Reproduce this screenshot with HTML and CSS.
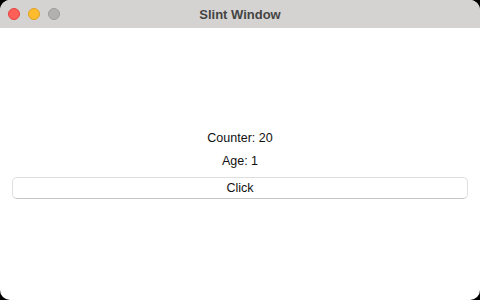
FILE: index.html
```html
<!DOCTYPE html>
<html>
<head>
<meta charset="utf-8">
<link rel="stylesheet" href="styles.css">
</head>
<body>
<div class="window">
  <div class="titlebar">
    <div class="lights">
      <span class="light red"></span>
      <span class="light yellow"></span>
      <span class="light gray"></span>
    </div>
    <div class="title">Slint Window</div>
  </div>
  <div class="content">
    <div class="label">Counter: 20</div>
    <div class="label">Age: 1</div>
    <button class="btn">Click</button>
  </div>
</div>
</body>
</html>
```
FILE: styles.css
```css
html, body {
  margin: 0;
  padding: 0;
  background: #000;
  width: 480px;
  height: 300px;
  overflow: hidden;
}
.window {
  width: 480px;
  height: 300px;
  border-radius: 10px;
  overflow: hidden;
  background: #fff;
  display: flex;
  flex-direction: column;
  font-family: "Liberation Sans", Arial, sans-serif;
}
.titlebar {
  height: 28px;
  flex: none;
  background: #d5d3d1;
  position: relative;
  display: flex;
  align-items: center;
  justify-content: center;
}
.lights {
  position: absolute;
  left: 8px;
  top: 8px;
  display: flex;
  gap: 8px;
}
.light {
  width: 12px;
  height: 12px;
  border-radius: 50%;
  box-sizing: border-box;
}
.red { background: #fe5f57; border: 0.5px solid #e0443e; }
.yellow { background: #febc2e; border: 0.5px solid #dea123; }
.gray { background: #b3b1af; border: 0.5px solid #9e9c9a; }
.title {
  font-size: 13px;
  font-weight: bold;
  color: #444;
}
.content {
  flex: 1;
  display: flex;
  flex-direction: column;
  justify-content: center;
  align-items: stretch;
  padding: 0 12px;
}
.label {
  font-size: 12.5px;
  line-height: 16px;
  height: 16px;
  text-align: center;
  color: #111;
  margin-bottom: 7px;
}
.label + .label + .btn { margin-top: 1px; }
.btn {
  height: 22px;
  font-family: "Liberation Sans", Arial, sans-serif;
  font-size: 12.5px;
  color: #111;
  background: #fff;
  border: 1px solid #dedede;
  border-bottom-color: #c6c6c6;
  border-radius: 5px;
  padding: 0;
}
```
